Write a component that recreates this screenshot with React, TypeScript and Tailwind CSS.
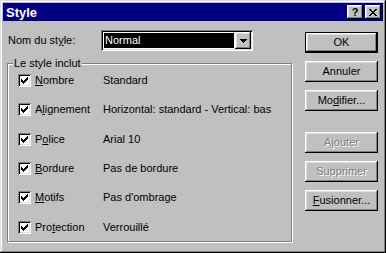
import React from 'react';

type Row = { before: string; key: string; after: string; value: string };

const rows: Row[] = [
  { before: '', key: 'N', after: 'ombre', value: 'Standard' },
  { before: 'A', key: 'l', after: 'ignement', value: 'Horizontal: standard - Vertical: bas' },
  { before: 'P', key: 'o', after: 'lice', value: 'Arial 10' },
  { before: '', key: 'B', after: 'ordure', value: 'Pas de bordure' },
  { before: '', key: 'M', after: 'otifs', value: "Pas d'ombrage" },
  { before: 'Pro', key: 't', after: 'ection', value: 'Verrouillé' },
];

const raised =
  'shadow-[inset_-1px_-1px_#000,inset_1px_1px_#fff,inset_-2px_-2px_#808080,inset_2px_2px_#dfdfdf]';
const sunken =
  'shadow-[inset_1px_1px_#808080,inset_-1px_-1px_#fff,inset_2px_2px_#000,inset_-2px_-2px_#dfdfdf]';

const CheckBox: React.FC = () => (
  <div className={`w-[13px] h-[13px] bg-white relative shrink-0 ${sunken}`}>
    <svg width="7" height="7" viewBox="0 0 7 7" className="absolute left-[3px] top-[3px]" shapeRendering="crispEdges">
      <path
        d="M6 0h1v3h-1zM5 1h1v3h-1zM4 2h1v3h-1zM3 3h1v3h-1zM2 4h1v3h-1zM1 3h1v3h-1zM0 2h1v3h-1z"
        fill="#000"
      />
    </svg>
  </div>
);

const Button: React.FC<{
  children: React.ReactNode;
  isDefault?: boolean;
  disabled?: boolean;
  className?: string;
}> = ({ children, isDefault, disabled, className = '' }) => (
  <div
    className={`w-[73px] h-[21px] ${isDefault ? 'border border-black' : ''} ${className}`}
  >
    <div
      className={`w-full h-full flex items-center justify-center bg-[#c0c0c0] ${raised} ${
        disabled ? 'text-[#808080] [text-shadow:1px_1px_0_#fff]' : 'text-black'
      }`}
    >
      {children}
    </div>
  </div>
);

export default function App() {
  return (
    <div
      className="w-[386px] h-[253px] bg-[#c0c0c0] p-[3px] flex flex-col text-[11px] leading-none text-black shadow-[inset_-1px_-1px_#000,inset_1px_1px_#dfdfdf,inset_-2px_-2px_#808080,inset_2px_2px_#fff]"
      style={{ fontFamily: '"Liberation Sans", Arial, sans-serif' }}
    >
      {/* Title bar */}
      <div className="h-[18px] bg-[#000080] flex items-center pl-[3px] pr-[2px]">
        <span className="text-white font-bold text-[13px] flex-1">Style</span>
        <div className={`w-[16px] h-[14px] bg-[#c0c0c0] flex items-center justify-center font-bold text-[11px] ${raised}`}>
          ?
        </div>
        <div className={`w-[16px] h-[14px] bg-[#c0c0c0] ml-[2px] flex items-center justify-center ${raised}`}>
          <svg width="8" height="7" viewBox="0 0 8 7" shapeRendering="crispEdges">
            <path
              d="M0 0h2v1h-2zM6 0h2v1h-2zM1 1h2v1h-2zM5 1h2v1h-2zM2 2h4v1h-4zM3 3h2v1h-2zM2 4h4v1h-4zM1 5h2v1h-2zM5 5h2v1h-2zM0 6h2v1h-2zM6 6h2v1h-2z"
              fill="#000"
            />
          </svg>
        </div>
      </div>

      {/* Body */}
      <div className="flex-1 flex">
        {/* Left column */}
        <div className="w-[289px] pl-[4px] flex flex-col">
          <div className="mt-[9px] h-[21px] flex items-center">
            <span className="w-[94px] pl-[1px]">
              Nom du st<u>y</u>le:
            </span>
            <div className={`w-[152px] h-[21px] bg-white p-[2px] flex ${sunken}`}>
              <div className="flex-1 m-px bg-black text-white flex items-center pl-[1px]">Normal</div>
              <div className={`w-[16px] bg-[#c0c0c0] flex items-center justify-center ${raised}`}>
                <svg width="7" height="4" viewBox="0 0 7 4" shapeRendering="crispEdges">
                  <path d="M0 0h7v1h-7zM1 1h5v1h-5zM2 2h3v1h-3zM3 3h1v1h-1z" fill="#000" />
                </svg>
              </div>
            </div>
          </div>

          {/* Group box */}
          <div className="relative mt-[12px] w-[285px] h-[179px] border border-[#808080] shadow-[inset_1px_1px_#fff,1px_1px_#fff]">
            <span className="absolute left-[5px] -top-[6px] bg-[#c0c0c0] px-[1px]">Le style inclut</span>
            <div className="pt-[2px] pl-[10px] flex flex-col">
              {rows.map((r) => (
                <div key={r.value} className="h-[29.3px] flex items-center">
                  <CheckBox />
                  <span className="ml-[4px] w-[68px]">
                    {r.before}
                    <u>{r.key}</u>
                    {r.after}
                  </span>
                  <span>{r.value}</span>
                </div>
              ))}
            </div>
          </div>
        </div>

        {/* Right column */}
        <div className="pl-[13px] pt-[11px] flex flex-col">
          <Button isDefault>OK</Button>
          <Button className="mt-[8px]">Annuler</Button>
          <Button className="mt-[8px]">
            <span>
              Mo<u>d</u>ifier...
            </span>
          </Button>
          <Button disabled className="mt-[21px]">
            Ajouter
          </Button>
          <Button disabled className="mt-[8px]">
            Supprimer
          </Button>
          <Button className="mt-[8px]">
            <span>
              <u>F</u>usionner...
            </span>
          </Button>
        </div>
      </div>
    </div>
  );
}
